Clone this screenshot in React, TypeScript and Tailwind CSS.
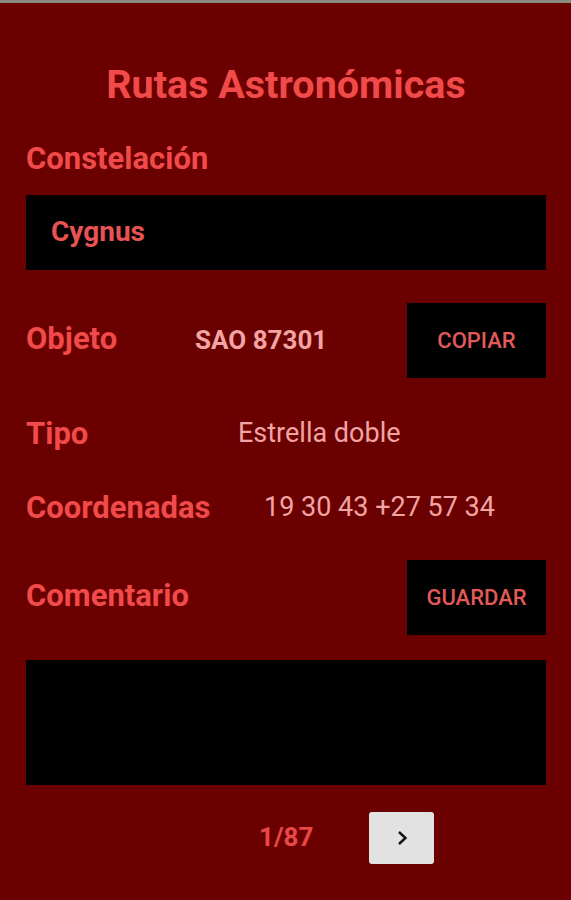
import React from 'react';

const label = 'text-[31px] font-bold text-[#f04a4a] leading-none';

const App: React.FC = () => {
  return (
    <div className="w-[571px] h-[900px] bg-[#6b0000] flex flex-col" style={{ fontFamily: 'Roboto, "Liberation Sans", sans-serif' }}>
      <div className="h-[3px] bg-[#8a8a80]" />
      <div className="flex flex-col pl-[26px] pr-[25px]">
        <h1 className="mt-[62px] text-center text-[39.5px] font-bold text-[#f04a4a] leading-none">Rutas Astronómicas</h1>

        <div className={`${label} mt-[38px]`}>Constelación</div>
        <div className="mt-[21px] h-[75px] bg-black flex items-center px-[25px]">
          <span className="text-[28px] font-bold text-[#e85252]">Cygnus</span>
        </div>

        <div className="mt-[33px] h-[75px] flex items-center">
          <span className={`${label} w-[169px] -mt-[4px]`}>Objeto</span>
          <span className="text-[26px] font-bold text-[#f2a4a4] flex-1">SAO 87301</span>
          <button className="w-[139px] h-[75px] bg-black text-[22px] font-medium text-[#e25a5a]">COPIAR</button>
        </div>

        <div className="mt-[36px] h-[40px] flex items-center">
          <span className={`${label} w-[212px]`}>Tipo</span>
          <span className="text-[27px] text-[#f2a4a4]">Estrella doble</span>
        </div>

        <div className="mt-[34px] h-[40px] flex items-center">
          <span className={`${label} w-[238px]`}>Coordenadas</span>
          <span className="text-[27px] text-[#f2a4a4]">19 30 43 +27 57 34</span>
        </div>

        <div className="mt-[32px] h-[75px] flex items-center">
          <span className={`${label} flex-1 -mt-[3px]`}>Comentario</span>
          <button className="w-[139px] h-[75px] bg-black text-[22px] font-medium text-[#e25a5a]">GUARDAR</button>
        </div>

        <div className="mt-[25px] h-[125px] bg-black" />

        <div className="mt-[27px] flex items-center">
          <span className="ml-[233px] text-[26px] font-bold text-[#e84848]">1/87</span>
          <button className="ml-[56px] w-[65px] h-[52px] rounded-[3px] bg-[#e2e2e2] flex items-center justify-center">
            <svg width="14" height="16" viewBox="0 0 14 16" fill="none" stroke="#111" strokeWidth="2.4">
              <path d="M4 2 L10.5 8 L4 14" />
            </svg>
          </button>
        </div>
      </div>
    </div>
  );
};

export default App;
